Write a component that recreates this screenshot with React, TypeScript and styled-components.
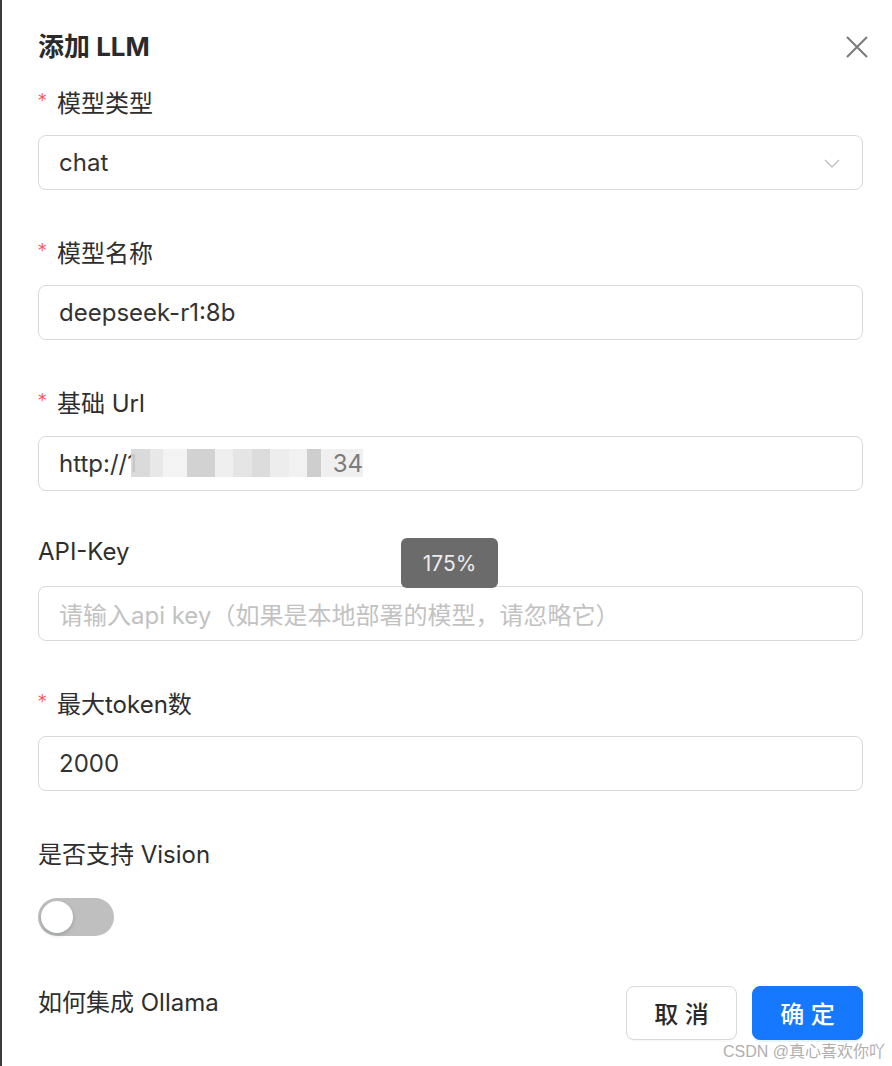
import React from 'react';
import styled, { createGlobalStyle } from 'styled-components';

const Global = createGlobalStyle`
  html, body { margin: 0; padding: 0; background: #fff; }
  body { font-family: Inter, "Noto Sans CJK SC", sans-serif; -webkit-font-smoothing: antialiased; }
  * { box-sizing: border-box; }
`;

const Page = styled.div`
  position: relative;
  width: 892px;
  height: 1066px;
  border-left: 2px solid #3c3c3c;
  padding: 28px 29px 0 36px;
  background: #fff;
  overflow: hidden;
  color: #2b2b2b;
`;

const Header = styled.div`
  display: flex;
  justify-content: space-between;
  align-items: center;
  height: 38px;
  margin-bottom: 9px;
`;

const Title = styled.h1`
  margin: 0;
  font-size: 26px;
  line-height: 38px;
  font-weight: 700;
  color: #2a2a2a;
`;

const CloseButton = styled.button`
  width: 22px;
  height: 22px;
  margin-right: -5px;
  padding: 0;
  border: none;
  background: transparent;
  display: flex;
  align-items: center;
  justify-content: center;
  cursor: pointer;
`;

const Item = styled.div`
  display: flex;
  flex-direction: column;
  gap: 8px;
  margin-bottom: 35.3px;
`;

const Label = styled.label`
  display: flex;
  align-items: center;
  height: 52px;
  font-size: 24px;
  color: #2e2e2e;
`;

const Star = styled.span`
  color: #ff4d4f;
  font-family: "DejaVu Sans", sans-serif;
  font-size: 17px;
  width: 19px;
  line-height: 1;
  margin-top: -2px;
`;

const Field = styled.div`
  position: relative;
  height: 55px;
  border: 1px solid #d9d9d9;
  border-radius: 8px;
  padding: 0 20px;
  display: flex;
  align-items: center;
  font-size: 24px;
  color: #333;
  background: #fff;
`;

const Placeholder = styled.span`
  color: #c2c2c2;
`;

const Chevron = styled.svg`
  position: absolute;
  right: 22px;
  top: 50%;
  margin-top: -4px;
`;

const Masked = styled.span`
  position: relative;
  display: inline-flex;
  align-items: center;
  margin-left: -6px;
  width: 240px;
  height: 32px;
  color: #555;
`;

const MaskBlocks = styled.span`
  position: absolute;
  left: 0;
  top: 2px;
  width: 232px;
  height: 28px;
  background:
    linear-gradient(90deg,
      #d6d6d6 0 8%, #e6e6e6 8% 14%, #f2f2f2 14% 24%, #cdcdcd 24% 36%, #ededed 36% 44%,
      #e2e2e2 44% 52%, #d8d8d8 52% 60%, #ebebeb 60% 68%, #f0f0f0 68% 76%, #c8c8c8 76% 82%,
      #eeeeee 82% 100%);
  opacity: 0.9;
`;

const MaskTail = styled.span`
  position: absolute;
  right: 8px;
  opacity: 0.75;
`;

const SwitchRow = styled.div`
  height: 55px;
  display: flex;
  align-items: center;
  padding-top: 6px;
`;

const Switch = styled.div`
  position: relative;
  width: 76px;
  height: 38px;
  border-radius: 19px;
  background: #bfbfbf;
`;

const Knob = styled.span`
  position: absolute;
  left: 3px;
  top: 3px;
  width: 32px;
  height: 32px;
  border-radius: 50%;
  background: #fff;
  box-shadow: 0 2px 4px rgba(0, 35, 11, 0.2);
`;

const Footer = styled.div`
  display: flex;
  justify-content: space-between;
  align-items: flex-start;
`;

const FooterText = styled.span`
  font-size: 24px;
  line-height: 52px;
  color: #2e2e2e;
`;

const Buttons = styled.div`
  display: flex;
  gap: 15px;
  margin-top: 9px;
`;

const Button = styled.button<{ $primary?: boolean }>`
  width: 111px;
  height: 54px;
  border-radius: 8px;
  font-family: inherit;
  font-size: 24px;
  font-weight: 500;
  border: 1px solid ${(p) => (p.$primary ? '#1677ff' : '#d9d9d9')};
  background: ${(p) => (p.$primary ? '#1677ff' : '#fff')};
  color: ${(p) => (p.$primary ? '#fff' : '#2a2a2a')};
  box-shadow: ${(p) => (p.$primary ? '0 2px 0 rgba(5,145,255,0.1)' : '0 2px 0 rgba(0,0,0,0.02)')};
`;

const Tooltip = styled.div`
  position: absolute;
  left: 399px;
  top: 538px;
  width: 97px;
  height: 50px;
  border-radius: 6px;
  background: #6b6b6b;
  color: #ececec;
  font-size: 21px;
  display: flex;
  align-items: center;
  justify-content: center;
`;

const Watermark = styled.div`
  position: absolute;
  right: 7px;
  bottom: 4px;
  font-size: 16px;
  color: #b0b0b0;
  font-family: "Liberation Sans", "Noto Sans CJK SC", sans-serif;
`;

const FormItem = ({ label, required, children }: { label: string; required?: boolean; children: React.ReactNode }) => (
  <Item>
    <Label>
      {required && <Star>*</Star>}
      {label}
    </Label>
    {children}
  </Item>
);

export default function App() {
  return (
    <>
      <Global />
      <Page>
        <Header>
          <Title>添加 LLM</Title>
          <CloseButton aria-label="close">
            <svg width="22" height="22" viewBox="0 0 22 22">
              <path d="M1 1 L21 21 M21 1 L1 21" stroke="#7a7a7a" strokeWidth="2" fill="none" />
            </svg>
          </CloseButton>
        </Header>
        <FormItem label="模型类型" required>
          <Field>
            chat
            <Chevron width="16" height="9" viewBox="0 0 16 9">
              <polyline points="1,1 8,8 15,1" stroke="#c0c0c0" strokeWidth="1.4" fill="none" />
            </Chevron>
          </Field>
        </FormItem>
        <FormItem label="模型名称" required>
          <Field>deepseek-r1:8b</Field>
        </FormItem>
        <FormItem label="基础 Url" required>
          <Field>
            http://1
            <Masked>
              <MaskBlocks />
              <MaskTail>34</MaskTail>
            </Masked>
          </Field>
        </FormItem>
        <FormItem label="API-Key">
          <Field>
            <Placeholder>请输入api key（如果是本地部署的模型，请忽略它）</Placeholder>
          </Field>
        </FormItem>
        <FormItem label="最大token数" required>
          <Field>2000</Field>
        </FormItem>
        <FormItem label="是否支持 Vision">
          <SwitchRow>
            <Switch>
              <Knob />
            </Switch>
          </SwitchRow>
        </FormItem>
        <Footer>
          <FooterText>如何集成 Ollama</FooterText>
          <Buttons>
            <Button>取 消</Button>
            <Button $primary>确 定</Button>
          </Buttons>
        </Footer>
        <Tooltip>175%</Tooltip>
        <Watermark>CSDN @真心喜欢你吖</Watermark>
      </Page>
    </>
  );
}
